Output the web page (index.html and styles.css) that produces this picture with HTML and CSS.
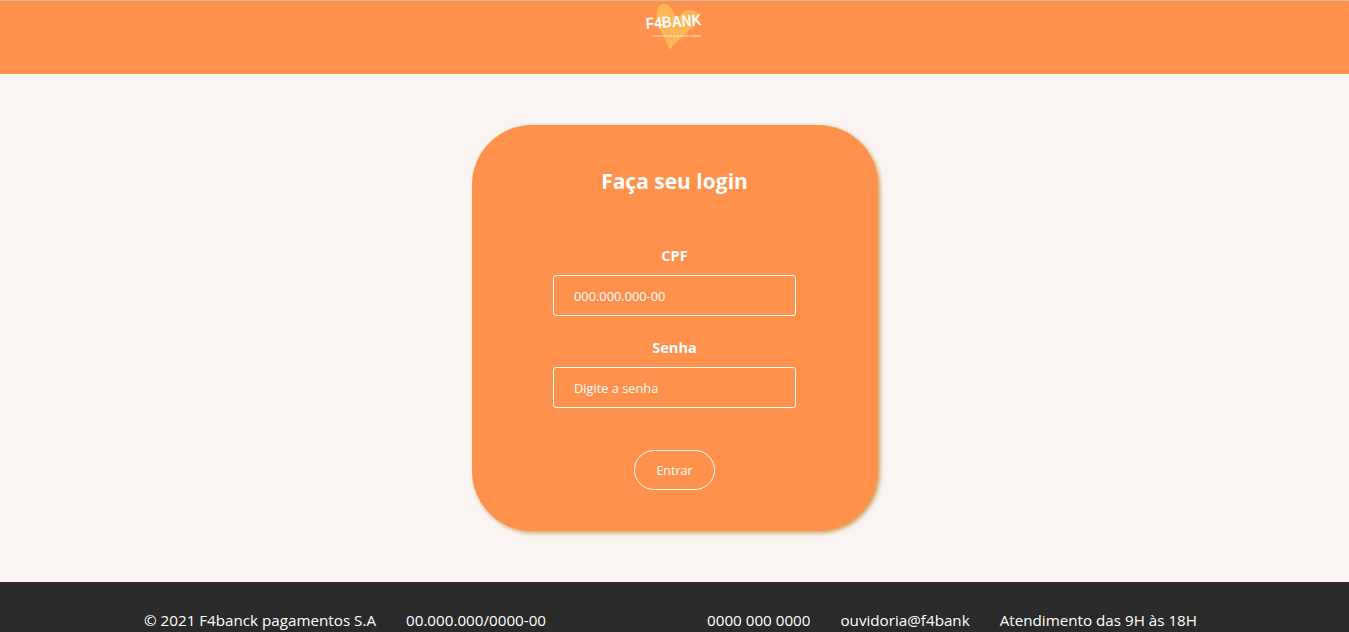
FILE: index.html
```html
<!DOCTYPE html>
<html lang="pt-BR">
<head>
    <meta charset="UTF-8">
    <meta name="viewport" content="width=device-width, initial-scale=1.0">
    <title>F4Bank - Login</title>
    <link rel="stylesheet" href="styles.css">
</head>
<body>
    <header class="topo">
        <div class="logo">
            <svg class="logo-heart" viewBox="0 0 60 52" aria-hidden="true">
                <path d="M26 49C22 38 14 28 13 18C12 9 15 3 20 3C26 3 30 10 32 19C36 13 42 8 48 9C54 10 56 14 53 20C48 30 33 38 26 49Z" fill="#fdb655"/>
            </svg>
            <span class="logo-nome">F4BANK</span>
            <span class="logo-sub">a nova era em pagamentos digitais</span>
        </div>
    </header>

    <main class="conteudo">
        <form class="card-login">
            <h1>Faça seu login</h1>
            <div class="form-group">
                <label for="cpf">CPF</label>
                <input type="text" id="cpf" placeholder="000.000.000-00">
            </div>
            <div class="form-group">
                <label for="senha">Senha</label>
                <input type="password" id="senha" placeholder="Digite a senha">
            </div>
            <button type="button">Entrar</button>
        </form>
    </main>

    <footer class="rodape">
        <div class="rodape-grupo">
            <span>© 2021 F4banck pagamentos S.A</span>
            <span>00.000.000/0000-00</span>
        </div>
        <div class="rodape-grupo">
            <span>0000 000 0000</span>
            <span>ouvidoria@f4bank</span>
            <span>Atendimento das 9H às 18H</span>
        </div>
    </footer>
</body>
</html>
```
FILE: styles.css
```css
* {
    box-sizing: border-box;
}
body {
    font-family: 'Open Sans', 'Noto Sans', sans-serif;
    margin: 0;
    padding: 0;
    background: #faf5f2;
    color: #fff;
}
.topo {
    height: 74px;
    background: #ff914d;
    border-top: 1px solid #d8b79f;
    display: flex;
    justify-content: center;
}
.logo {
    position: relative;
    width: 60px;
    height: 52px;
    margin-right: 2px;
}
.logo-heart {
    display: block;
    width: 60px;
    height: 52px;
}
.logo-nome {
    position: absolute;
    top: 14px;
    left: 2px;
    font-family: 'Liberation Sans', sans-serif;
    font-size: 16px;
    font-weight: 700;
    letter-spacing: 0.2px;
    line-height: 18px;
    white-space: nowrap;
    transform: rotate(-4deg) scaleX(0.84);
    transform-origin: left center;
}
.logo-sub {
    position: absolute;
    top: 33px;
    left: 9px;
    font-size: 3px;
    line-height: 4px;
    white-space: nowrap;
}
.conteudo {
    height: 508px;
    padding-top: 51px;
    display: flex;
    justify-content: center;
    align-items: flex-start;
}
.card-login {
    width: 406px;
    height: 406px;
    padding: 38px 81.5px 0;
    background: #ff914d;
    border-radius: 60px;
    box-shadow: 2px 2px 4px #c9a45c;
    display: flex;
    flex-direction: column;
    align-items: center;
}
h1 {
    margin: 0 0 46px;
    font-size: 21px;
    line-height: 36px;
    font-weight: 700;
}
.form-group {
    width: 100%;
    margin-bottom: 21px;
    text-align: center;
}
label {
    display: block;
    margin-bottom: 8px;
    font-size: 14.5px;
    line-height: 22px;
    font-weight: 700;
}
input {
    display: block;
    width: 243px;
    height: 41px;
    padding: 0 20px;
    border: 1px solid #fff;
    border-radius: 3px;
    background: transparent;
    color: #fff;
    font-family: inherit;
    font-size: 12.8px;
    outline: none;
}
input::placeholder {
    color: #fff;
    opacity: 1;
}
button {
    width: 81px;
    height: 40px;
    margin-top: 21px;
    border: 1px solid #fff;
    border-radius: 20px;
    background: transparent;
    color: #fff;
    font-family: inherit;
    font-size: 12.5px;
    cursor: pointer;
}
.rodape {
    height: 50px;
    padding: 27px 8px 0 0;
    background: #2a2a2a;
    display: flex;
    justify-content: center;
    gap: 161px;
    overflow: hidden;
    font-size: 15.2px;
    line-height: 22px;
    white-space: nowrap;
}
.rodape-grupo {
    display: flex;
    gap: 30px;
}
```
